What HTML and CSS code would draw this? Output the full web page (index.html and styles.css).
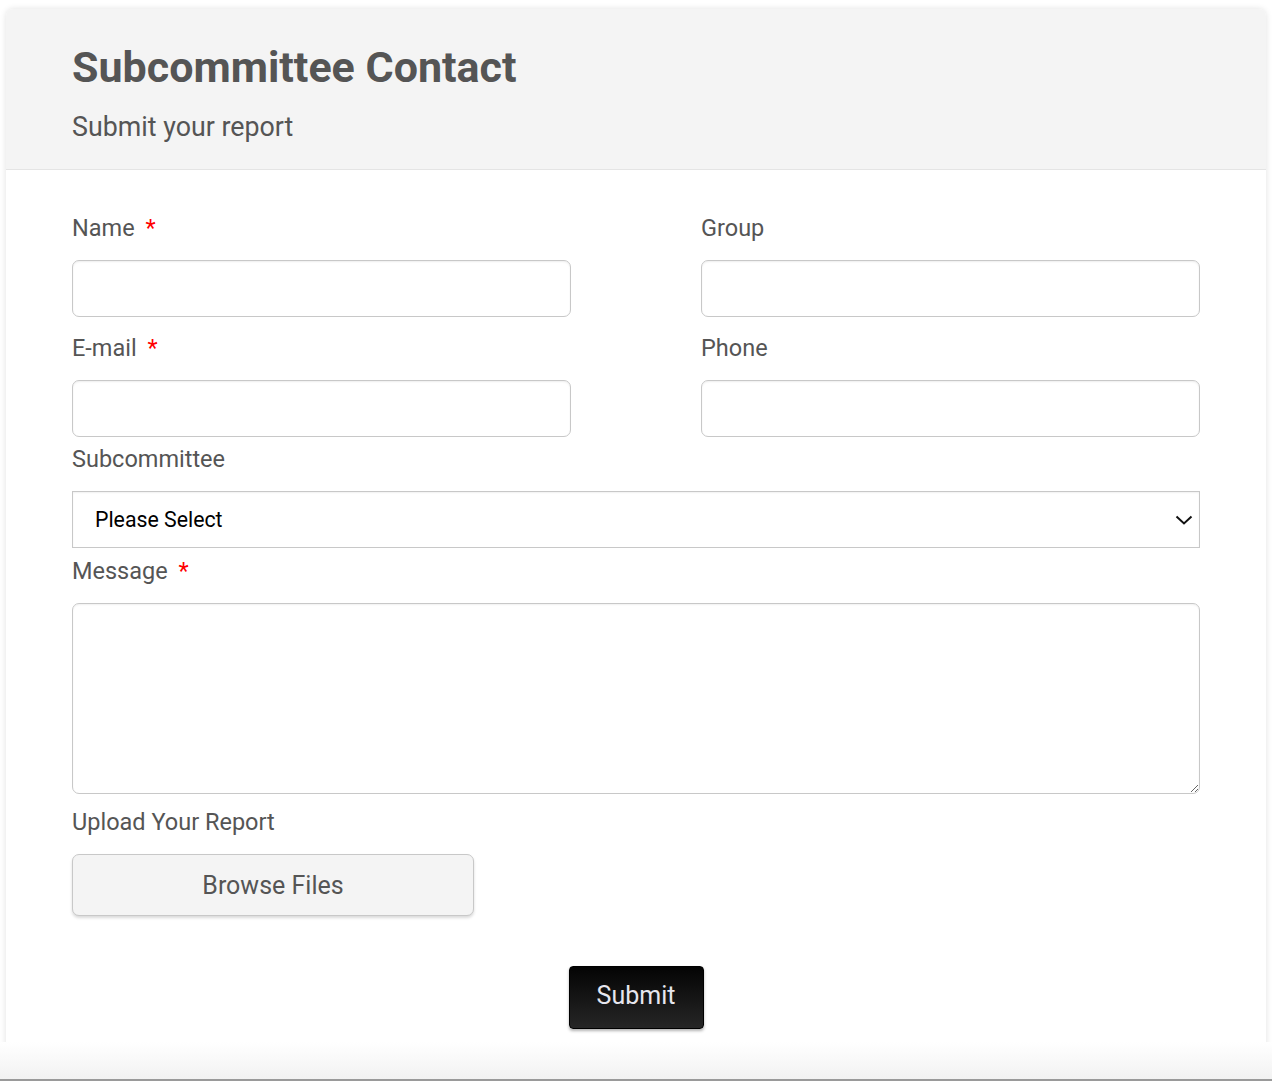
FILE: index.html
```html
<!DOCTYPE html>
<html lang="en">
<head>
<meta charset="utf-8">
<title>Subcommittee Contact</title>
<link rel="stylesheet" href="styles.css">
</head>
<body>
<div class="viewport">
  <form class="card">
    <header class="card-header">
      <h1 class="title">Subcommittee Contact</h1>
      <p class="subtitle">Submit your report</p>
    </header>
    <div class="card-body">
      <div class="row two">
        <div class="field">
          <label class="label">Name <span class="req">*</span></label>
          <input class="input" type="text">
        </div>
        <div class="field">
          <label class="label">Group</label>
          <input class="input" type="text">
        </div>
      </div>
      <div class="row two">
        <div class="field">
          <label class="label">E-mail <span class="req">*</span></label>
          <input class="input" type="text">
        </div>
        <div class="field">
          <label class="label">Phone</label>
          <input class="input" type="text">
        </div>
      </div>
      <div class="field wide f-select">
        <label class="label">Subcommittee</label>
        <div class="select">
          <span class="select-text">Please Select</span>
          <svg class="chevron" width="18" height="12" viewBox="0 0 18 12"><path d="M1.5 2.5 L9 9.5 L16.5 2.5" fill="none" stroke="#111" stroke-width="2"/></svg>
        </div>
      </div>
      <div class="field wide f-message">
        <label class="label">Message <span class="req">*</span></label>
        <textarea class="textarea"></textarea>
      </div>
      <div class="field wide f-upload">
        <label class="label">Upload Your Report</label>
        <button type="button" class="browse">Browse Files</button>
      </div>
      <div class="actions">
        <button type="button" class="submit">Submit</button>
      </div>
    </div>
  </form>
</div>
<div class="footer-strip"></div>
</body>
</html>
```
FILE: styles.css
```css
* { box-sizing: border-box; }
html, body { margin: 0; padding: 0; background: #fff; }
body { font-family: Roboto, "Liberation Sans", sans-serif; color: #555; }

.viewport {
  height: 1042px;
  overflow: hidden;
  padding: 9px 6px 0 6px;
}
.card {
  background: #fff;
  border-radius: 7px 7px 0 0;
  box-shadow: 0 0 6px rgba(0,0,0,0.12);
  min-height: 1100px;
}
.card-header {
  background: #f4f4f4;
  border-bottom: 1px solid #e4e4e4;
  border-radius: 7px 7px 0 0;
  padding: 32px 66px 0 66px;
  height: 161px;
}
.title {
  margin: 0;
  font-size: 43px;
  line-height: 52px;
  font-weight: 700;
  color: #555;
}
.subtitle {
  margin: 18px 0 0 0;
  font-size: 26.8px;
  line-height: 32px;
  color: #555;
}
.card-body {
  padding: 44px 66px 0 66px;
}
.row.two {
  display: grid;
  grid-template-columns: 499px 499px;
  column-gap: 130px;
}
.field { display: flex; flex-direction: column; }
.row.two + .row.two { margin-top: 17px; }
.f-select { margin-top: 8px; }
.f-message { margin-top: 9px; }
.f-upload { margin-top: 14px; }
.label {
  font-size: 23.5px;
  line-height: 28px;
  margin-bottom: 18px;
  color: #555;
}
.req { color: #f00; margin-left: 5px; }
.input {
  height: 57px;
  border: 1px solid #c8c8c8;
  border-radius: 7px;
  box-shadow: inset 0 1px 2px rgba(0,0,0,0.07);
  background: #fff;
  font: inherit;
}
.select {
  height: 57px;
  border: 1px solid #c8c8c8;
  box-shadow: inset 0 1px 2px rgba(0,0,0,0.06);
  display: flex;
  align-items: center;
  justify-content: space-between;
  padding: 0 6px 0 22px;
}
.select-text { color: #000; font-size: 21.3px; }
.chevron { display: block; }
.textarea {
  height: 191px;
  border: 1px solid #c8c8c8;
  border-radius: 7px;
  box-shadow: inset 0 1px 2px rgba(0,0,0,0.06);
  font: inherit;
  resize: both;
}
.browse {
  width: 402px;
  height: 62px;
  background: #f4f4f4;
  border: 1px solid #c8c8c8;
  border-radius: 7px;
  box-shadow: 0 2px 3px rgba(0,0,0,0.15);
  color: #555;
  font-family: Roboto, "Liberation Sans", sans-serif;
  font-size: 25px;
  cursor: pointer;
}
.actions {
  display: flex;
  justify-content: center;
  margin-top: 50px;
}
.submit {
  width: 135px;
  height: 63px;
  padding: 0 0 4px 0;
  background: linear-gradient(#040404, #262626);
  border: 1px solid #000;
  border-radius: 4px;
  box-shadow: 0 2px 3px rgba(0,0,0,0.3);
  color: #e6e6ee;
  font-family: Roboto, "Liberation Sans", sans-serif;
  font-size: 25px;
  cursor: pointer;
}
.footer-strip {
  height: 39px;
  background: linear-gradient(#ffffff, #f2f2f2);
  border-bottom: 2px solid #9a9a9a;
}
```
